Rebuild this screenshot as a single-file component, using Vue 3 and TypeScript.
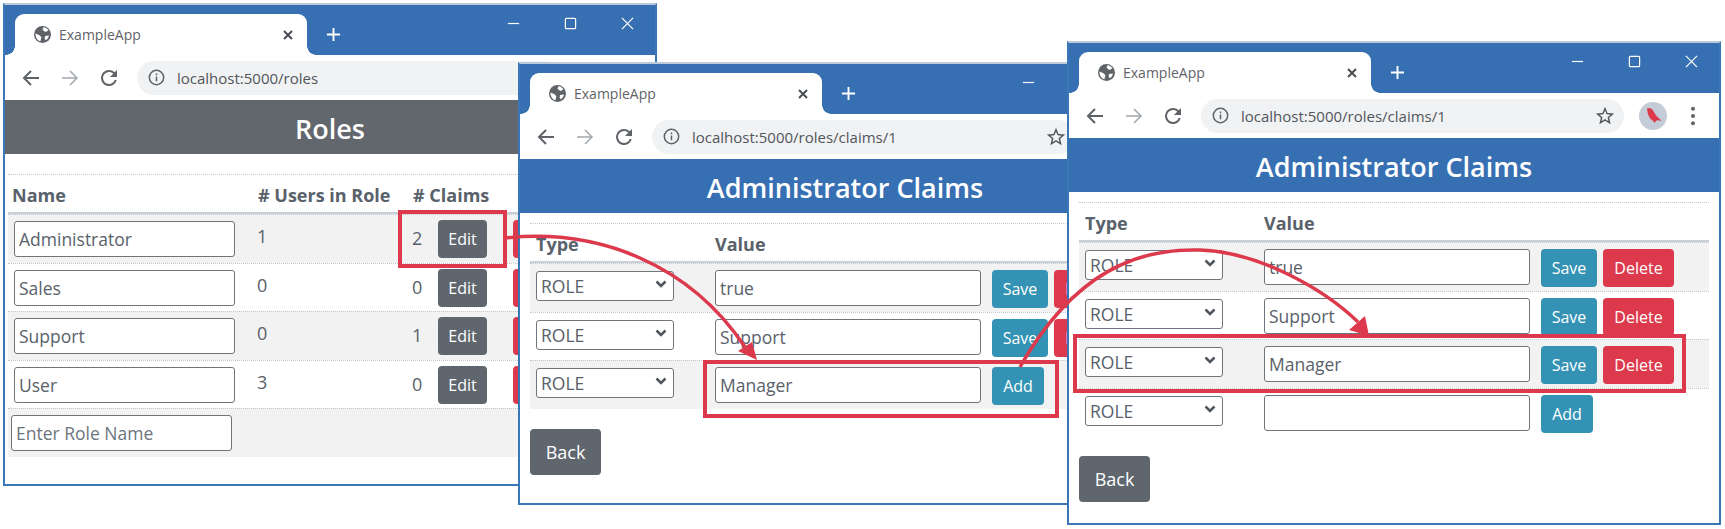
<script setup lang="ts">
import { computed } from 'vue';

interface Role { name: string; users: number; claims: number }
interface BrowserWindow {
  id: string;
  left: number;
  top: number;
  height: number;
  url: string;
  title: string;
  grayHead?: boolean;
  roles?: Role[];
  claims?: string[];
}

const roles: Role[] = [
  { name: 'Administrator', users: 1, claims: 2 },
  { name: 'Sales', users: 0, claims: 0 },
  { name: 'Support', users: 0, claims: 1 },
  { name: 'User', users: 3, claims: 0 }
];

const windows: BrowserWindow[] = [
  { id: 'w1', left: 3, top: 3, height: 483, url: 'localhost:5000/roles', title: 'Roles', grayHead: true, roles },
  { id: 'w2', left: 518, top: 62, height: 443, url: 'localhost:5000/roles/claims/1', title: 'Administrator Claims', claims: ['true', 'Support'] },
  { id: 'w3', left: 1067, top: 41, height: 484, url: 'localhost:5000/roles/claims/1', title: 'Administrator Claims', claims: ['true', 'Support', 'Manager'] }
];

const placed = computed(() =>
  windows.map((w) => ({
    ...w,
    pos: { left: w.left + 'px', top: w.top + 'px', height: w.height + 'px' },
    // the empty row only has a value in the middle window
    addValue: w.id === 'w2' ? 'Manager' : ''
  }))
);
</script>

<template>
  <div class="canvas">
    <section v-for="w in placed" :key="w.id" class="browser" :class="w.id" :style="w.pos">
      <div class="titlebar">
        <div class="tab">
          <svg class="globe" viewBox="0 0 16 16">
            <circle cx="8" cy="8" r="8" fill="#5f6368" />
            <path d="M9 1.2c2 .2 3.6 1.4 4.6 2.8L11 5.6 9.4 4.6 8 3.4zM1.4 7l3.8 1.6L7 10.6 6 14.4C3.2 13.6 1.2 10.6 1.4 7zM10.4 9.4l3.6-.4c-.2 1.8-1.2 3.4-2.8 4.4L10 12z" fill="#fff" />
          </svg>
          <span class="tab-title">ExampleApp</span>
          <svg class="tab-close" viewBox="0 0 12 12"><path d="M2 2l8 8M10 2l-8 8" /></svg>
        </div>
        <svg class="plus" viewBox="0 0 16 16"><path d="M8 1v14M1 8h14" /></svg>
        <div class="controls">
          <svg viewBox="0 0 14 14"><path d="M1 7h12" /></svg>
          <svg viewBox="0 0 14 14"><rect x="1.5" y="1.5" width="11" height="11" rx="1" /></svg>
          <svg viewBox="0 0 14 14"><path d="M1 1l12 12M13 1L1 13" /></svg>
        </div>
      </div>

      <div class="toolbar">
        <svg class="nav" viewBox="0 0 20 20"><path d="M18 10H3M10 3l-7 7 7 7" /></svg>
        <svg class="nav off" viewBox="0 0 20 20"><path d="M2 10h15M10 3l7 7-7 7" /></svg>
        <svg class="reload" viewBox="0 0 24 24"><path d="M17.65 6.35A7.95 7.95 0 0 0 12 4a8 8 0 1 0 7.73 10h-2.08A6 6 0 1 1 12 6c1.66 0 3.14.69 4.22 1.78L13 11h7V4l-2.35 2.35z" /></svg>
        <div class="omnibox">
          <svg class="info" viewBox="0 0 18 18">
            <circle cx="9" cy="9" r="7.6" />
            <path d="M9 8v5M9 4.8v1.8" />
          </svg>
          <span class="url">{{ w.url }}</span>
          <svg class="star" viewBox="0 0 24 24"><path d="M22 9.24l-7.19-.62L12 2 9.19 8.63 2 9.24l5.46 4.73L5.82 21 12 17.27 18.18 21l-1.63-7.03L22 9.24zM12 15.4l-3.76 2.27 1-4.28-3.32-2.88 4.38-.38L12 6.1l1.71 4.04 4.38.38-3.32 2.88 1 4.28L12 15.4z" /></svg>
        </div>
        <svg class="avatar" viewBox="0 0 28 28">
          <circle cx="14" cy="14" r="14" fill="#c3ccd7" />
          <path d="M8 6.500c2.500-1.300 4.800-.3 6 2l3.500 5.500 5 4.800-4.800-.6-2.200 2.800-1.500-2.300C11 17.500 8.500 13 8 6.500z" fill="#dc3a4c" />
        </svg>
        <svg class="kebab" viewBox="0 0 6 22">
          <circle cx="3" cy="3" r="2.200" /><circle cx="3" cy="11" r="2.200" /><circle cx="3" cy="19" r="2.200" />
        </svg>
      </div>

      <h1 class="page-head" :class="{ gray: w.grayHead }">{{ w.title }}</h1>

      <div class="content">
        <template v-if="w.roles">
          <div class="row head role-row">
            <span class="name-head">Name</span><span># Users in Role</span><span># Claims</span>
          </div>
          <div v-for="r in w.roles" :key="r.name" class="row role-row">
            <div class="cell-input"><input class="field role-field" :value="r.name" /></div>
            <span class="num">{{ r.users }}</span>
            <div class="claims-cell">
              <span class="num count">{{ r.claims }}</span>
              <button class="btn edit">Edit</button>
              <button class="btn del">Delete</button>
            </div>
          </div>
          <div class="row role-row">
            <div class="cell-input new-role"><input class="field role-field" placeholder="Enter Role Name" /></div>
          </div>
        </template>

        <template v-else>
          <div class="row head claim-row"><span>Type</span><span>Value</span></div>
          <div v-for="c in w.claims" :key="c" class="row claim-row">
            <div class="select-wrap">
              <select class="role-select"><option>ROLE</option></select>
              <svg class="chev" viewBox="0 0 12 8"><path d="M1.500 1.500L6 6l4.500-4.500" /></svg>
            </div>
            <input class="field value-field" :value="c" />
            <div class="actions">
              <button class="btn save">Save</button>
              <button class="btn del">Delete</button>
            </div>
          </div>
          <div class="row claim-row">
            <div class="select-wrap">
              <select class="role-select"><option>ROLE</option></select>
              <svg class="chev" viewBox="0 0 12 8"><path d="M1.500 1.500L6 6l4.500-4.500" /></svg>
            </div>
            <input class="field value-field" :value="w.addValue" />
            <div class="actions">
              <button class="btn save add">Add</button>
            </div>
          </div>
          <button class="btn back">Back</button>
        </template>
      </div>
    </section>

    <!-- callout boxes and arrows sit over all three windows -->
    <svg class="overlay" viewBox="0 0 1725 529">
      <rect x="400" y="212" width="105" height="54" />
      <rect x="705" y="362" width="352" height="54" />
      <rect x="1075" y="336" width="609" height="55" />
      <path d="M505 238C600 228 690 265 745 347" />
      <path d="M1020 367C1075 270 1140 248 1200 250C1260 252 1325 290 1358 322" />
      <polygon points="757,360 738,351 752,342" />
      <polygon points="1369,336 1349,330 1365,316" />
    </svg>
  </div>
</template>

<style>
html, body { margin: 0; background: #fff; }
</style>

<style scoped>
.canvas {
  position: relative;
  width: 1725px;
  height: 529px;
  overflow: hidden;
  background: #fff;
  font-family: "Open Sans", "Noto Sans", sans-serif;
  color: #59616a;
}

.browser {
  position: absolute;
  width: 654px;
  box-sizing: border-box;
  border: 2px solid #3a77b7;
  border-top-color: #bcc9d8;
  background: #fff;
  overflow: hidden;
}

.titlebar {
  position: relative;
  display: flex;
  align-items: flex-end;
  height: 50px;
  padding-left: 10px;
  background: #376fb3;
}
.tab {
  position: relative;
  display: flex;
  align-items: center;
  width: 292px;
  height: 41px;
  box-sizing: border-box;
  padding: 0 13px 0 19px;
  background: #fff;
  border-radius: 9px 9px 0 0;
}
.tab::before, .tab::after {
  content: "";
  position: absolute;
  bottom: 0;
  width: 9px;
  height: 9px;
}
.tab::before { left: -9px; background: radial-gradient(circle at 0 0, #376fb3 8.500px, #fff 9px); }
.tab::after { right: -9px; background: radial-gradient(circle at 100% 0, #376fb3 8.500px, #fff 9px); }
.globe { width: 17px; height: 17px; flex: none; }
.tab-title { margin-left: 8px; font-size: 14px; color: #5f6368; }
.tab-close { width: 12px; height: 12px; margin-left: auto; }
.tab-close path { stroke: #4a4f55; stroke-width: 2; fill: none; }
.plus { width: 15px; height: 15px; margin: 0 0 13px 19px; }
.plus path { stroke: #fff; stroke-width: 2; }
.controls {
  position: absolute;
  top: 0;
  right: 0;
  display: flex;
  gap: 44px;
  padding: 12px 21px 0 0;
}
.controls svg { width: 13px; height: 13px; fill: none; stroke: #fff; stroke-width: 1.300; }

.toolbar {
  display: flex;
  align-items: center;
  height: 45px;
  padding-left: 16px;
  background: #fff;
}
.nav { width: 20px; height: 20px; margin-right: 19px; fill: none; stroke: #5f6368; stroke-width: 2; }
.nav.off { stroke: #a3a8ae; stroke-width: 1.500; }
.reload { width: 24px; height: 24px; margin-left: -2px; fill: #5f6368; }
.omnibox {
  display: flex;
  align-items: center;
  width: 423px;
  height: 34px;
  box-sizing: border-box;
  margin-left: 16px;
  padding: 0 8px 0 11px;
  border-radius: 17px;
  background: #f1f2f3;
}
.info { width: 17px; height: 17px; flex: none; fill: none; stroke: #5f6368; stroke-width: 1.600; }
.url { margin-left: 12px; font-size: 15px; color: #50565c; }
.star { width: 22px; height: 22px; margin-left: auto; fill: #50565c; }
.avatar { width: 28px; height: 28px; margin-left: 15px; }
.kebab { width: 6px; height: 20px; margin-left: 23px; fill: #5f6368; }

.page-head {
  height: 54px;
  margin: 0;
  background: #376fb3;
  color: #fff;
  font-size: 27px;
  font-weight: 600;
  line-height: 57px;
  text-align: center;
}
.page-head.gray { background: #61676d; }

.content { padding: 10px 10px 0; }
.w1 .content { padding: 20px 3px 0; }

.row {
  height: 48.500px;
  box-sizing: border-box;
  border-top: 1px dotted #c3c8ce;
  padding: 6px;
  font-size: 18px;
}
.row:nth-child(even) { background: #f2f2f2; }
.row.head {
  height: 40px;
  border-bottom: 2px solid #c9d0d8;
  font-weight: 700;
  font-size: 18px;
  line-height: 24px;
  background: #fff;
}

.role-row { display: grid; grid-template-columns: 243px 155px 1fr; padding: 0; }
.role-row.head { padding-top: 8px; }
.role-row.head span { padding-left: 7px; }
.role-row.head .name-head { padding-left: 4px; }
.cell-input { padding: 6px; }
.new-role { padding-left: 3px; }
.field {
  box-sizing: border-box;
  height: 36px;
  padding: 0 4px;
  border: 1.500px solid #6f757b;
  border-radius: 3px;
  background: #fff;
  font: 17.500px "Open Sans", "Noto Sans", sans-serif;
  color: #59616a;
}
.field::placeholder { color: #6c757d; opacity: 1; }
.role-field { width: 221px; }
.num { padding: 9px 0 0 6px; line-height: 24px; }
.claims-cell { display: flex; align-items: flex-start; padding: 5px 0 0 6px; }
.count { width: 26px; flex: none; padding: 6px 0 0; }

.btn {
  box-sizing: border-box;
  height: 38px;
  padding: 0;
  border: 0;
  border-radius: 4px;
  color: #fff;
  font: 16px "Open Sans", "Noto Sans", sans-serif;
}
.edit { width: 49px; background: #5f666e; }
.del { width: 71px; margin-left: 26px; background: #dc3a4c; }
.save { width: 56px; background: #3493b5; }
.save.add { width: 52px; }
.actions { display: flex; align-items: flex-start; }
.actions .del { margin-left: 6px; }
.back {
  display: block;
  width: 71px;
  height: 46px;
  margin-top: 20px;
  background: #5f666e;
  font-size: 18px;
}

.claim-row { display: flex; align-items: flex-start; }
.claim-row.head span:first-child { width: 179px; }
.claim-row.head { padding-top: 8px; }
.select-wrap { position: relative; width: 138px; margin-right: 41px; margin-top: 1px; }
.role-select {
  width: 138px;
  height: 30px;
  box-sizing: border-box;
  padding: 0 4px;
  appearance: none;
  border: 1.500px solid #6f757b;
  border-radius: 3px;
  background: #fff;
  font: 17.500px "Open Sans", "Noto Sans", sans-serif;
  color: #59616a;
}
.chev {
  position: absolute;
  top: 9px;
  right: 7px;
  width: 12px;
  height: 8px;
  fill: none;
  stroke: #4f565d;
  stroke-width: 2.500;
}
.value-field { width: 266px; margin-right: 11px; }

.overlay {
  position: absolute;
  inset: 0;
  width: 1725px;
  height: 529px;
  pointer-events: none;
}
.overlay rect, .overlay path { fill: none; stroke: #dc3a4c; stroke-width: 4; }
.overlay path { stroke-width: 3.500; }
.overlay polygon { fill: #dc3a4c; }
</style>
